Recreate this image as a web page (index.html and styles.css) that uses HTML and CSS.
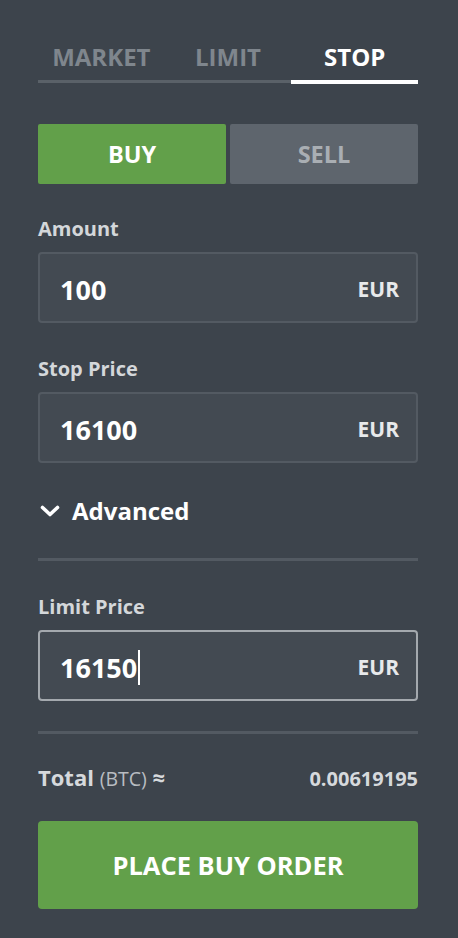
FILE: index.html
```html
<!DOCTYPE html>
<html lang="en">
<head>
<meta charset="utf-8">
<title>Stop order</title>
<link rel="stylesheet" href="styles.css">
</head>
<body>
<div class="panel">
  <div class="tabs">
    <div class="tab">MARKET</div>
    <div class="tab">LIMIT</div>
    <div class="tab active">STOP</div>
  </div>

  <div class="side">
    <div class="side-btn buy">BUY</div>
    <div class="side-btn sell">SELL</div>
  </div>

  <div class="field first">
    <div class="label">Amount</div>
    <div class="input">
      <span class="value">100</span>
      <span class="unit">EUR</span>
    </div>
  </div>

  <div class="field">
    <div class="label">Stop Price</div>
    <div class="input">
      <span class="value">16100</span>
      <span class="unit">EUR</span>
    </div>
  </div>

  <div class="advanced">
    <svg class="chevron" width="20" height="12" viewBox="0 0 20 12"><polyline points="2.5,2.5 10,9.5 17.5,2.5" fill="none" stroke="#ffffff" stroke-width="3.6" stroke-linecap="round" stroke-linejoin="round"/></svg>
    <span>Advanced</span>
  </div>

  <div class="divider"></div>

  <div class="field limit">
    <div class="label">Limit Price</div>
    <div class="input focused">
      <span class="value">16150<span class="caret"></span></span>
      <span class="unit">EUR</span>
    </div>
  </div>

  <div class="divider second"></div>

  <div class="total">
    <div class="total-label"><b>Total</b> <span class="cur">(BTC)</span> <b>≈</b></div>
    <div class="total-value">0.00619195</div>
  </div>

  <div class="place">PLACE BUY ORDER</div>
</div>
</body>
</html>
```

FILE: styles.css
```css
* { box-sizing: border-box; }

html, body {
  margin: 0;
  padding: 0;
  background: #3d444c;
}

body {
  font-family: "Open Sans", "Noto Sans", sans-serif;
  color: #ffffff;
}

.panel {
  padding: 41px 40px 0 38px;
  display: flex;
  flex-direction: column;
}

.tabs {
  display: flex;
  align-items: flex-start;
}

.tab {
  flex: 1;
  text-align: center;
  font-size: 24px;
  font-weight: 700;
  line-height: 32px;
  padding-bottom: 7px;
  color: #7f868d;
  border-bottom: 3px solid #5a6168;
}

.tab.active {
  color: #ffffff;
  border-bottom: 4px solid #ffffff;
}

.side {
  display: flex;
  gap: 4px;
  margin-top: 40px;
}

.side-btn {
  flex: 1;
  height: 60px;
  display: flex;
  align-items: center;
  justify-content: center;
  font-size: 23.5px;
  font-weight: 700;
  border-radius: 2px;
}

.buy {
  background: #62a04a;
  color: #ffffff;
}

.sell {
  background: #5e656d;
  color: #a9aeb3;
}

.field {
  margin-top: 31px;
  display: flex;
  flex-direction: column;
  gap: 10px;
}

.field.first { margin-top: 30px; }
.field.limit { margin-top: 31px; }

.label {
  font-size: 20px;
  font-weight: 700;
  line-height: 28px;
  padding-top: 1px;
  color: #d4d7da;
}

.input {
  height: 71px;
  margin-top: -1px;
  display: flex;
  align-items: center;
  justify-content: space-between;
  padding: 3px 17px 0 20px;
  background: #434a52;
  border: 2px solid #535a62;
  border-radius: 4px;
}

.input.focused {
  border-color: #a4a9ae;
}

.value {
  font-size: 27px;
  font-weight: 700;
  color: #ffffff;
  display: flex;
  align-items: center;
}

.caret {
  display: inline-block;
  width: 2px;
  height: 35px;
  background: #ffffff;
  margin-left: 1px;
}

.unit {
  font-size: 21px;
  font-weight: 700;
  color: #e7e9eb;
}

.advanced {
  margin-top: 32px;
  display: flex;
  align-items: center;
  gap: 12px;
  padding-left: 2px;
  font-size: 24px;
  font-weight: 700;
  line-height: 32px;
  color: #ffffff;
}

.chevron { flex: none; }

.divider {
  margin-top: 31px;
  height: 3px;
  background: #535a62;
}

.divider.second { margin-top: 30px; }

.total {
  margin-top: 28px;
  display: flex;
  justify-content: space-between;
  align-items: baseline;
  line-height: 30px;
}

.total-label {
  font-size: 22px;
  color: #d6d9dc;
}

.total-label b { font-weight: 700; }

.cur {
  font-size: 19.5px;
  font-weight: 400;
  color: #b8bcc1;
}

.total-value {
  font-size: 20px;
  font-weight: 700;
  color: #d6d9dc;
}

.place {
  margin-top: 27px;
  height: 88px;
  display: flex;
  align-items: center;
  justify-content: center;
  background: #62a04a;
  border-radius: 4px;
  font-size: 25.5px;
  font-weight: 700;
  color: #ffffff;
}
```
